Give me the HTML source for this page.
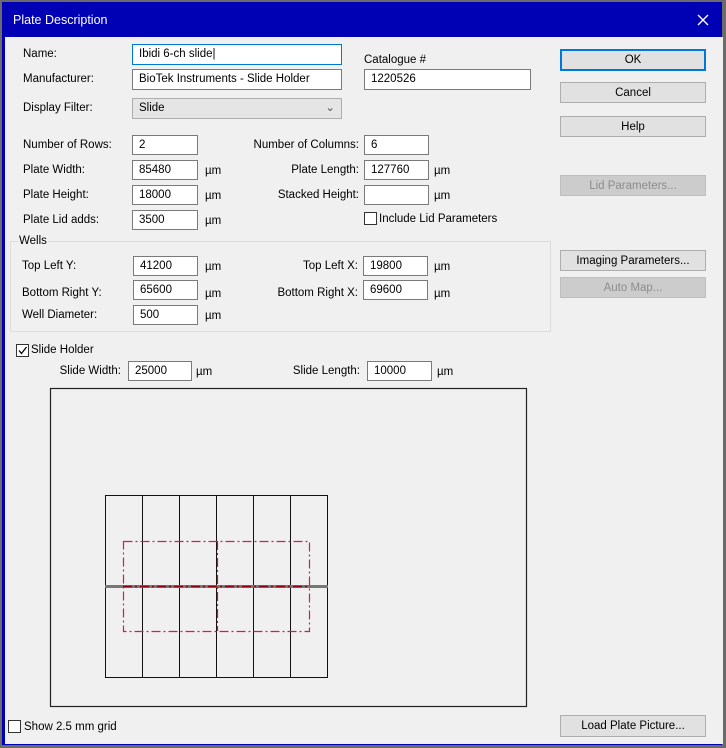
<!DOCTYPE html><html><head><style>
body{margin:0;width:726px;height:748px;background:#6b6b6b;font-family:"Liberation Sans",sans-serif;font-size:11.5px;color:#000;overflow:hidden}
#w{position:absolute;left:2px;top:2px;width:720px;height:743px;background:#0000b4}
#c{position:absolute;left:5px;top:37px;width:718px;height:707px;background:#f0f0f0}
.a{position:absolute}
.l{position:absolute;white-space:nowrap}
.r{position:absolute;white-space:nowrap;text-align:right}
.i{position:absolute;background:#fff;border:1px solid #7a7a7a;box-sizing:border-box;padding:3px 0 0 6px;white-space:nowrap}
.b{position:absolute;background:#e1e1e1;border:1px solid #adadad;box-sizing:border-box;text-align:center;line-height:20px}
.d{background:#cccccc;border-color:#bfbfbf;color:#8d8d8d}
.cb{position:absolute;width:13px;height:13px;background:#fff;border:1px solid #333;box-sizing:border-box}
</style></head><body>
<div id="w"></div>
<div class="l" style="left:13px;top:13px;color:#fff;font-size:12.5px">Plate Description</div>
<svg class="a" style="left:697px;top:14px" width="12" height="12"><path d="M1 1L11 11M11 1L1 11" stroke="#fff" stroke-width="1.4"/></svg>
<div id="c"></div>
<div class="l" style="left:23px;top:48px">Name:</div>
<div class="i" style="left:132px;top:44px;width:210px;height:21px;border-color:#0078d7">Ibidi 6-ch slide|</div>
<div class="l" style="left:23px;top:73px">Manufacturer:</div>
<div class="i" style="left:132px;top:69px;width:210px;height:21px">BioTek Instruments - Slide Holder</div>
<div class="l" style="left:364px;top:54px">Catalogue #</div>
<div class="i" style="left:364px;top:69px;width:167px;height:21px">1220526</div>
<div class="l" style="left:23px;top:102px">Display Filter:</div>
<div class="i" style="left:132px;top:98px;width:210px;height:21px;background:#e5e5e5;border-color:#adadad">Slide<span style="position:absolute;right:6px;top:1px;color:#555">&#8964;</span></div>

<div class="l" style="left:23px;top:139px">Number of Rows:</div>
<div class="i" style="left:132px;top:135px;width:66px;height:20px">2</div>
<div class="r" style="left:200px;width:159px;top:139px">Number of Columns:</div>
<div class="i" style="left:364px;top:135px;width:65px;height:20px">6</div>

<div class="l" style="left:23px;top:164px">Plate Width:</div>
<div class="i" style="left:132px;top:160px;width:66px;height:20px">85480</div><div class="l" style="left:205px;top:165px">µm</div>
<div class="r" style="left:200px;width:159px;top:164px">Plate Length:</div>
<div class="i" style="left:364px;top:160px;width:65px;height:20px">127760</div><div class="l" style="left:434px;top:165px">µm</div>

<div class="l" style="left:23px;top:189px">Plate Height:</div>
<div class="i" style="left:132px;top:185px;width:66px;height:20px">18000</div><div class="l" style="left:205px;top:190px">µm</div>
<div class="r" style="left:200px;width:159px;top:189px">Stacked Height:</div>
<div class="i" style="left:364px;top:185px;width:65px;height:20px"></div><div class="l" style="left:434px;top:190px">µm</div>

<div class="l" style="left:23px;top:214px">Plate Lid adds:</div>
<div class="i" style="left:132px;top:210px;width:66px;height:20px">3500</div><div class="l" style="left:205px;top:215px">µm</div>
<div class="cb" style="left:364px;top:212px"></div><div class="l" style="left:379px;top:213px">Include Lid Parameters</div>

<div class="a" style="left:10px;top:241px;width:541px;height:91px;border:1px solid #dcdcdc;box-sizing:border-box"></div>
<div class="l" style="left:18px;top:235px;background:#f0f0f0;padding:0 1px">Wells</div>
<div class="l" style="left:22px;top:260px">Top Left Y:</div>
<div class="i" style="left:133px;top:256px;width:65px;height:20px">41200</div><div class="l" style="left:205px;top:261px">µm</div>
<div class="r" style="left:200px;width:158px;top:260px">Top Left X:</div>
<div class="i" style="left:363px;top:256px;width:65px;height:20px">19800</div><div class="l" style="left:434px;top:261px">µm</div>
<div class="l" style="left:22px;top:287px">Bottom Right Y:</div>
<div class="i" style="left:133px;top:280px;width:65px;height:20px">65600</div><div class="l" style="left:205px;top:288px">µm</div>
<div class="r" style="left:200px;width:158px;top:287px">Bottom Right X:</div>
<div class="i" style="left:363px;top:280px;width:65px;height:20px">69600</div><div class="l" style="left:434px;top:288px">µm</div>
<div class="l" style="left:22px;top:309px">Well Diameter:</div>
<div class="i" style="left:133px;top:305px;width:65px;height:20px">500</div><div class="l" style="left:205px;top:310px">µm</div>

<div class="cb" style="left:16px;top:344px"></div>
<svg class="a" style="left:16px;top:344px" width="13" height="13"><path d="M3 6.5L5.5 9.5L10.5 3" stroke="#000" stroke-width="1.3" fill="none"/></svg>
<div class="l" style="left:31px;top:344px">Slide Holder</div>
<div class="r" style="left:40px;width:81px;top:365px">Slide Width:</div>
<div class="i" style="left:128px;top:361px;width:64px;height:20px">25000</div><div class="l" style="left:196px;top:366px">µm</div>
<div class="r" style="left:260px;width:100px;top:365px">Slide Length:</div>
<div class="i" style="left:367px;top:361px;width:65px;height:20px">10000</div><div class="l" style="left:437px;top:366px">µm</div>

<svg class="a" style="left:0;top:0" width="726" height="748">
<rect x="50.5" y="388.5" width="476" height="318" fill="none" stroke="#222" stroke-width="1.2"/>
<rect x="105.5" y="495.5" width="222" height="182" fill="none" stroke="#111"/>
<path d="M142.5 495V678M179.5 495V678M216.5 495V678M253.5 495V678M290.5 495V678" stroke="#111"/>
<rect x="105" y="585" width="223" height="3" fill="#777"/>
<rect x="123.5" y="541.5" width="186" height="90" fill="none" stroke="#d0204a" stroke-width="1.2" stroke-dasharray="9,3,2,3"/>
<path d="M217.5 541V631" stroke="#c0143c" stroke-width="1.2" stroke-dasharray="9,3,2,3"/>
<path d="M123 586.5H310" stroke="#8a0010" stroke-width="1.5" stroke-dasharray="9,3,2,3"/>
</svg>

<div class="b" style="left:560px;top:49px;width:146px;height:22px;border:2px solid #0078d7;line-height:18px">OK</div>
<div class="b" style="left:560px;top:82px;width:146px;height:21px">Cancel</div>
<div class="b" style="left:560px;top:116px;width:146px;height:21px">Help</div>
<div class="b d" style="left:560px;top:175px;width:146px;height:21px">Lid Parameters...</div>
<div class="b" style="left:560px;top:250px;width:146px;height:21px">Imaging Parameters...</div>
<div class="b d" style="left:560px;top:277px;width:146px;height:21px">Auto Map...</div>
<div class="b" style="left:560px;top:715px;width:146px;height:22px">Load Plate Picture...</div>
<div class="cb" style="left:8px;top:720px"></div><div class="l" style="left:24px;top:721px">Show 2.5 mm grid</div>
</body></html>
